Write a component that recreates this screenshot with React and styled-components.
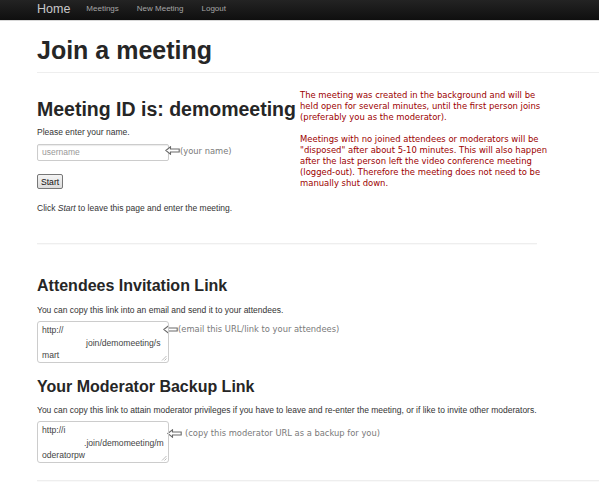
import styled, { createGlobalStyle } from 'styled-components'

const GlobalStyle = createGlobalStyle`
  body {
    margin: 0;
    background: #fff;
    font-family: "Liberation Sans", Arial, sans-serif;
    color: #333;
  }
`

const Page = styled.div`
  width: 599px;
  min-height: 490px;
  overflow: hidden;
`

const Navbar = styled.div`
  height: 20px;
  background: linear-gradient(#232323, #0f0f0f);
  border-bottom: 1px solid #d8d8d8;
  display: flex;
  align-items: center;
  padding-left: 37px;
`

const Brand = styled.a`
  font-size: 12.5px;
  color: #c8c8c8;
  margin-right: 16px;
  margin-top: -3px;
`

const NavLink = styled.a`
  font-size: 8px;
  color: #a6a6a6;
  margin-right: 18px;
  margin-top: -3px;
`

const Container = styled.div`
  padding-left: 37px;
`

const PageHeader = styled.div`
  border-bottom: 1px solid #eee;
  padding: 15px 0 8px;
`

const Title = styled.h1`
  margin: 0;
  font-size: 25px;
  line-height: 28px;
  font-weight: bold;
  color: #262626;
`

const Row = styled.div`
  display: flex;
  align-items: flex-start;
`

const LeftCol = styled.div`
  width: 263px;
  flex: none;
`

const Notice = styled.div`
  width: 254px;
  padding-top: 17px;
  font-family: "DejaVu Sans", Tahoma, sans-serif;
  font-size: 8.45px;
  line-height: 11px;
  color: #9c0000;

  p {
    margin: 0 0 11px;
  }
`

const Heading = styled.h2`
  margin: 0;
  white-space: nowrap;
  font-size: ${p => p.$size}px;
  line-height: ${p => p.$lh}px;
  font-weight: bold;
  color: #262626;
  padding-top: ${p => p.$top}px;
`

const Text = styled.p`
  margin: 0;
  font-size: 8.5px;
  line-height: 12px;
  color: #333;
  padding-top: ${p => p.$top || 0}px;
`

const FieldRow = styled.div`
  display: flex;
  align-items: ${p => (p.$top ? 'flex-start' : 'center')};
  margin-top: ${p => p.$mt}px;
`

const NameInput = styled.div`
  width: 122px;
  height: 15px;
  border: 1px solid #ccc;
  border-radius: 2px;
  box-shadow: inset 0 1px 1px rgba(0, 0, 0, 0.08);
  padding: 0 4px;
  font-size: 8.5px;
  line-height: 15px;
  color: #999;
`

const Note = styled.span`
  display: flex;
  align-items: center;
  font-family: "DejaVu Sans", Tahoma, sans-serif;
  font-size: 8.35px;
  color: #7a7a7a;
  margin-left: ${p => p.$ml || 0}px;
  margin-top: ${p => p.$mt || 0}px;
  gap: ${p => p.$gap || 0}px;
`

const StartButton = styled.button`
  margin-top: 13px;
  display: block;
  height: 15px;
  padding: 0 3px;
  font-family: "Liberation Sans", Arial, sans-serif;
  font-size: 8.6px;
  color: #111;
  background: linear-gradient(#f4f4f4, #dcdcdc);
  border: 1px solid #777;
  border-radius: 2px;
`

const Rule = styled.hr`
  margin: ${p => p.$mt}px 0 0;
  width: ${p => p.$w}px;
  border: 0;
  border-top: 1px solid #eee;
  box-shadow: 0 1px 1px rgba(0, 0, 0, 0.03);
`

const LinkBox = styled.div`
  position: relative;
  box-sizing: border-box;
  width: 132px;
  height: 42px;
  border: 1px solid #ccc;
  border-radius: 3px;
  padding: 2px 4px;
  font-size: 8.6px;
  line-height: 12.5px;
  color: #444;
`

const Line = styled.div`
  padding-left: ${p => p.$indent || 0}px;
  white-space: nowrap;
`

const Grip = styled.svg`
  position: absolute;
  right: 1px;
  bottom: 1px;
`

const Arrow = () => (
  <svg width="15" height="9" viewBox="0 0 15 9">
    <path
      d="M0.8 4.5 L5.5 0.8 L5.5 3 L14.2 3 L14.2 6 L5.5 6 L5.5 8.2 Z"
      fill="#fff"
      stroke="#6a6a6a"
      strokeWidth="1.1"
    />
  </svg>
)

const LinkField = ({ lines }) => (
  <LinkBox>
    {lines.map((l, i) => (
      <Line key={i} $indent={l.indent}>
        {l.text}
      </Line>
    ))}
    <Grip width="6" height="6" viewBox="0 0 6 6">
      <path d="M1 5.5 L5.5 1 M3.5 5.5 L5.5 3.5" stroke="#aaa" strokeWidth="0.8" />
    </Grip>
  </LinkBox>
)

function App() {
  return (
    <Page>
      <GlobalStyle />
      <Navbar>
        <Brand>Home</Brand>
        <NavLink>Meetings</NavLink>
        <NavLink>New Meeting</NavLink>
        <NavLink>Logout</NavLink>
      </Navbar>
      <Container>
        <PageHeader>
          <Title>Join a meeting</Title>
        </PageHeader>
        <Row>
          <LeftCol>
            <Heading $size={19.5} $lh={24} $top={24}>
              Meeting ID is: demomeeting
            </Heading>
            <Text $top={5}>Please enter your name.</Text>
            <FieldRow $mt={6}>
              <NameInput>username</NameInput>
              <Note $ml={-4} $mt={-4}>
                <Arrow />
                (your name)
              </Note>
            </FieldRow>
            <StartButton>Start</StartButton>
            <Text $top={13}>
              Click <i>Start</i> to leave this page and enter the meeting.
            </Text>
          </LeftCol>
          <Notice>
            <p>
              The meeting was created in the background and will be held open
              for several minutes, until the first person joins (preferably you
              as the moderator).
            </p>
            <p>
              Meetings with no joined attendees or moderators will be
              "disposed" after about 5-10 minutes. This will also happen after
              the last person left the video conference meeting (logged-out).
              Therefore the meeting does not need to be manually shut down.
            </p>
          </Notice>
        </Row>
        <Rule $mt={29} $w={500} />
        <Heading $size={16} $lh={20} $top={32}>
          Attendees Invitation Link
        </Heading>
        <Text $top={8}>
          You can copy this link into an email and send it to your attendees.
        </Text>
        <FieldRow $mt={5} $top>
          <LinkField
            lines={[
              { text: 'http://' },
              { text: 'join/demomeeting/s', indent: 44 },
              { text: 'mart' }
            ]}
          />
          <Note $ml={-6} $mt={3}>
            <Arrow />
            (email this URL/link to your attendees)
          </Note>
        </FieldRow>
        <Heading $size={16} $lh={20} $top={14}>
          Your Moderator Backup Link
        </Heading>
        <Text $top={7}>
          You can copy this link to attain moderator privileges if you have to
          leave and re-enter the meeting, or if like to invite other moderators.
        </Text>
        <FieldRow $mt={5} $top>
          <LinkField
            lines={[
              { text: 'http://i' },
              { text: '.join/demomeeting/m', indent: 42 },
              { text: 'oderatorpw' }
            ]}
          />
          <Note $ml={-2} $mt={7} $gap={3}>
            <Arrow />
            (copy this moderator URL as a backup for you)
          </Note>
        </FieldRow>
        <Rule $mt={17} $w={562} />
      </Container>
    </Page>
  )
}

export default App
